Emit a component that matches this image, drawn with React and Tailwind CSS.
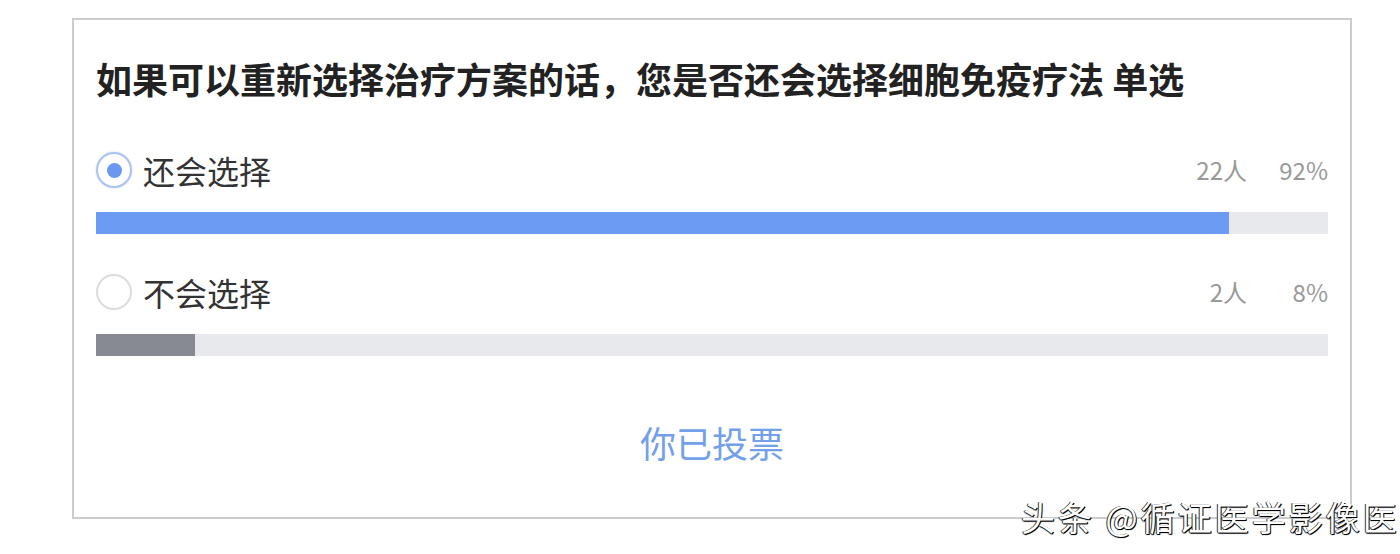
import React from "react";

const options = [
  { label: "还会选择", count: "22人", pct: 92, checked: true },
  { label: "不会选择", count: "2人", pct: 8, checked: false },
];

function Radio({ checked }) {
  if (checked) {
    return (
      <div className="w-[36px] h-[36px] rounded-full border-2 border-[#a9c2f3] shadow-[0_0_2px_#c6d6f7] flex items-center justify-center shrink-0">
        <div className="w-[15px] h-[15px] rounded-full bg-[#6a98f1]" />
      </div>
    );
  }
  return (
    <div className="w-[36px] h-[36px] rounded-full border-2 border-[#dcdcdc] shrink-0" />
  );
}

export default function App() {
  return (
    <div className="relative w-[1400px] h-[554px] bg-white overflow-hidden font-['Noto_Sans_CJK_SC','Noto_Sans',sans-serif]">
      <div className="ml-[72px] mt-[18px] w-[1280px] h-[501px] border-2 border-[#cccccc] px-[22px] flex flex-col">
        <h1 className="mt-[37px] text-[36px] leading-[42px] font-bold text-[#222222] whitespace-nowrap">
          如果可以重新选择治疗方案的话，您是否还会选择细胞免疫疗法 单选
        </h1>
        <div className="mt-[53px] flex flex-col">
          {options.map((o, i) => (
            <div key={i} className={i === 0 ? "" : "mt-[40px]"}>
              <div className="flex items-center h-[36px]">
                <Radio checked={o.checked} />
                <span className="ml-[11px] text-[32px] leading-[36px] text-[#333333]">{o.label}</span>
                <span className="ml-auto text-[24px] leading-[36px] text-[#999999]">{o.count}</span>
                <span className="w-[81px] text-right text-[24px] leading-[36px] text-[#999999]">{o.pct}%</span>
              </div>
              <div className="mt-[24px] h-[22px] bg-[#e8e9ec]">
                <div
                  className={o.checked ? "h-full bg-[#6c9bf3]" : "h-full bg-[#878a93]"}
                  style={{ width: `${o.pct}%` }}
                />
              </div>
            </div>
          ))}
        </div>
        <div className="mt-[64px] text-center text-[36px] leading-[44px] text-[#74a0ea]">你已投票</div>
      </div>
      <div className="absolute left-[1021px] top-[497px] text-[34px] leading-[40px] tracking-[3px] text-white whitespace-nowrap [text-shadow:1px_1px_0_#000,-1px_0_0_#333,0_1px_1px_#000]">
        头条 @循证医学影像医
      </div>
    </div>
  );
}
